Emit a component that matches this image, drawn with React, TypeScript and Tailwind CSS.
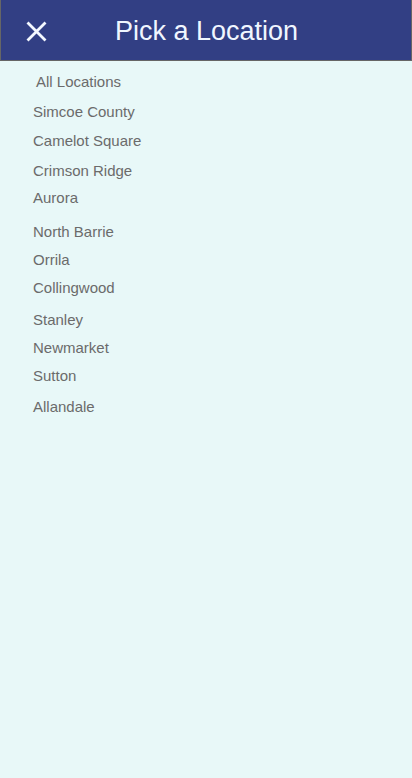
import React from "react";

const items: [string, number, number][] = [
  ["All Locations", 12, 36],
  ["Simcoe County", 13, 33],
  ["Camelot Square", 12, 33],
  ["Crimson Ridge", 13, 33],
  ["Aurora", 10, 33],
  ["North Barrie", 17, 33],
  ["Orrila", 11, 33],
  ["Collingwood", 11, 33],
  ["Stanley", 15, 33],
  ["Newmarket", 11, 33],
  ["Sutton", 11, 33],
  ["Allandale", 14, 33],
];

const mtClass: Record<number, string> = {
  10: "mt-[10px]",
  11: "mt-[11px]",
  12: "mt-[12px]",
  13: "mt-[13px]",
  14: "mt-[14px]",
  15: "mt-[15px]",
  17: "mt-[17px]",
};

export default function App() {
  return (
    <div
      className="w-[412px] h-[778px] bg-[#e8f8f8] flex flex-col"
      style={{ fontFamily: '"Liberation Sans", Arial, sans-serif' }}
    >
      <div className="h-[61px] bg-[#323f84] border-x border-b border-[#666666] flex items-center shrink-0">
        <div className="w-[114px] pl-[25px] pt-[2px] flex items-center">
          <svg width="21" height="21" viewBox="0 0 21 21" fill="none" stroke="#f4f8ff" strokeWidth="2.8" strokeLinecap="butt">
            <path d="M1.5 1.5 L19.5 19.5 M19.5 1.5 L1.5 19.5" />
          </svg>
        </div>
        <span className="text-[27px] leading-none text-[#f0f6ff] pt-[3px]">Pick a Location</span>
      </div>
      <div className="flex flex-col">
        {items.map(([name, mt, pl]) => (
          <div
            key={name}
            className={`${mtClass[mt]} ${pl === 36 ? "pl-[36px]" : "pl-[33px]"} text-[15px] leading-[17px] text-[#6b6b6b]`}
          >
            {name}
          </div>
        ))}
      </div>
    </div>
  );
}
